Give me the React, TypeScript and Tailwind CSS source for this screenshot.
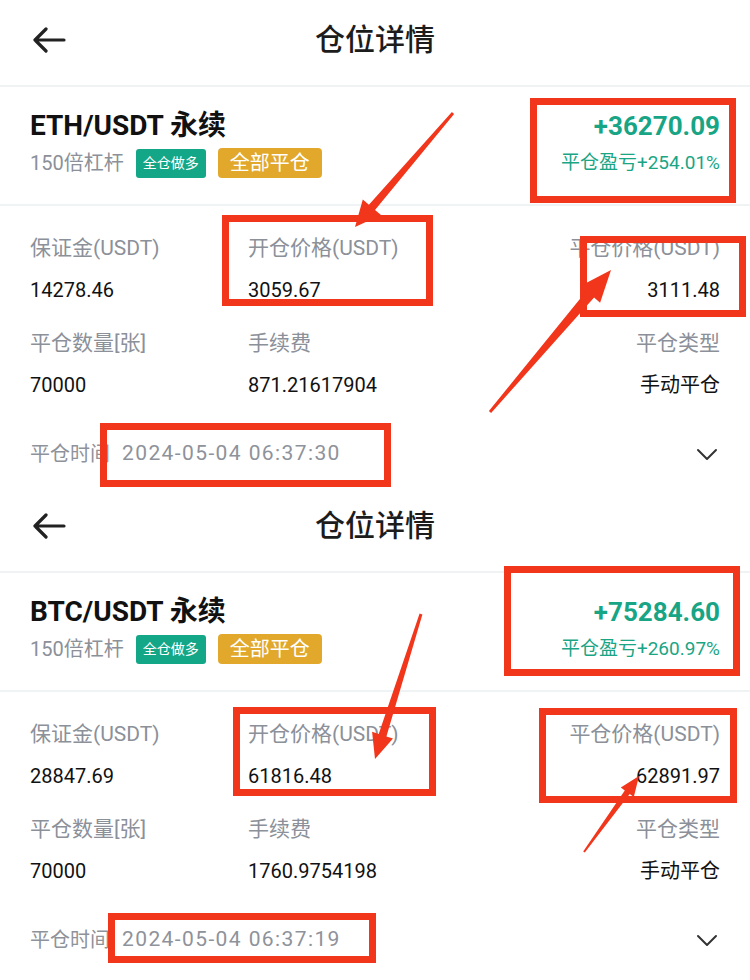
import React from 'react';

type Position = {
  pair: string;
  pnl: string;
  pnlRate: string;
  margin: string;
  openPrice: string;
  closePrice: string;
  qty: string;
  fee: string;
  closeType: string;
  closeTime: string;
};

const positions: Position[] = [
  {
    pair: 'ETH/USDT 永续',
    pnl: '+36270.09',
    pnlRate: '平仓盈亏+254.01%',
    margin: '14278.46',
    openPrice: '3059.67',
    closePrice: '3111.48',
    qty: '70000',
    fee: '871.21617904',
    closeType: '手动平仓',
    closeTime: '2024-05-04 06:37:30',
  },
  {
    pair: 'BTC/USDT 永续',
    pnl: '+75284.60',
    pnlRate: '平仓盈亏+260.97%',
    margin: '28847.69',
    openPrice: '61816.48',
    closePrice: '62891.97',
    qty: '70000',
    fee: '1760.9754198',
    closeType: '手动平仓',
    closeTime: '2024-05-04 06:37:19',
  },
];

// red annotation boxes drawn over the screenshots: [left, top, width, height]
const boxes = [
  [530, 98, 206, 105],
  [222, 215, 211, 91],
  [580, 236, 166, 81],
  [100, 423, 291, 64],
  [504, 566, 236, 110],
  [233, 707, 203, 89],
  [539, 708, 198, 95],
  [108, 913, 268, 50],
];

const arrows = [
  { from: [453, 113], to: [355, 227], head: 26, wing: 12, tail: 1.5, neck: 4 },
  { from: [490, 412], to: [611, 270], head: 32, wing: 13, tail: 1.5, neck: 5 },
  { from: [421, 614], to: [375, 759], head: 25, wing: 11, tail: 1.5, neck: 4 },
  { from: [584, 852], to: [639, 776], head: 20, wing: 8, tail: 1, neck: 3 },
];

function arrowPoints(a: (typeof arrows)[number]) {
  const [x1, y1] = a.from;
  const [x2, y2] = a.to;
  const len = Math.hypot(x2 - x1, y2 - y1);
  const dx = (x2 - x1) / len;
  const dy = (y2 - y1) / len;
  const nx = -dy;
  const ny = dx;
  const bx = x2 - dx * a.head;
  const by = y2 - dy * a.head;
  const pts = [
    [x1 + nx * a.tail, y1 + ny * a.tail],
    [bx + nx * a.neck, by + ny * a.neck],
    [bx + nx * a.wing, by + ny * a.wing],
    [x2, y2],
    [bx - nx * a.wing, by - ny * a.wing],
    [bx - nx * a.neck, by - ny * a.neck],
    [x1 - nx * a.tail, y1 - ny * a.tail],
  ];
  return pts.map((p) => p.map((v) => v.toFixed(1)).join(',')).join(' ');
}

function BackIcon() {
  return (
    <svg width="34" height="26" viewBox="0 0 34 26" fill="none" stroke="#222" strokeWidth="3.2" strokeLinecap="round" strokeLinejoin="round">
      <path d="M32 13H3M14 2L3 13l11 11" />
    </svg>
  );
}

function ChevronDown() {
  return (
    <svg width="22" height="13" viewBox="0 0 22 13" fill="none" stroke="#333" strokeWidth="2" strokeLinecap="round" strokeLinejoin="round">
      <path d="M2 2l9 9 9-9" />
    </svg>
  );
}

function Panel({ p }: { p: Position }) {
  return (
    <section className="flex flex-col pb-[19px]">
      <header className="grid h-[85px] grid-cols-[1fr_auto_1fr] items-center px-[32px] pb-[5px]">
        <BackIcon />
        <h1 className="text-[30px] font-medium leading-[40px] text-[#1c1c1c]">仓位详情</h1>
        <div />
      </header>
      <div className="h-[2px] bg-[#f0f3f3]" />

      <div className="flex flex-col px-[30px] pt-[24px] pb-[26px]">
        <div className="flex h-[30px] items-center justify-between">
          <span className="text-[28px] font-bold text-[#111]">{p.pair}</span>
          <span className="text-[26px] font-bold text-[#17a585]">{p.pnl}</span>
        </div>
        <div className="mt-[7px] flex h-[30px] items-center justify-between">
          <div className="flex items-center">
            <span className="text-[20px] text-[#8b9099]">150倍杠杆</span>
            <span className="ml-[12px] flex h-[29px] items-center rounded-[3px] bg-[#13a788] px-[7px] text-[14px] text-white">全仓做多</span>
            <span className="ml-[12px] flex h-[30px] items-center rounded-[4px] bg-[#e1a82c] px-[12px] text-[20px] text-white">全部平仓</span>
          </div>
          <span className="text-[19px] text-[#1aa585]">{p.pnlRate}</span>
        </div>
      </div>
      <div className="h-[2px] bg-[#f0f3f3]" />

      <div className="flex flex-col px-[30px] pt-[29px]">
        <div className="grid grid-cols-[218px_1fr_auto] leading-[26px]">
          <span className="text-[21px] text-[#8b9099]">保证金(USDT)</span>
          <span className="text-[21px] text-[#8b9099]">开仓价格(USDT)</span>
          <span className="text-right text-[21px] text-[#8b9099]">平仓价格(USDT)</span>
          <span className="mt-[16px] text-[20px] text-[#111]">{p.margin}</span>
          <span className="mt-[16px] text-[20px] text-[#111]">{p.openPrice}</span>
          <span className="mt-[16px] text-right text-[20px] text-[#111]">{p.closePrice}</span>

          <span className="mt-[27px] text-[21px] text-[#8b9099]">平仓数量[张]</span>
          <span className="mt-[27px] text-[21px] text-[#8b9099]">手续费</span>
          <span className="mt-[27px] text-right text-[21px] text-[#8b9099]">平仓类型</span>
          <span className="mt-[16px] text-[20px] text-[#111]">{p.qty}</span>
          <span className="mt-[16px] text-[20px] text-[#111]">{p.fee}</span>
          <span className="mt-[16px] text-right text-[20px] text-[#111]">{p.closeType}</span>
        </div>

        <div className="mt-[43px] flex h-[26px] items-center justify-between">
          <div className="flex items-center text-[20px] text-[#8e929a]">
            <span>平仓时间</span>
            <span className="ml-[12px] text-[21px] tracking-[1.4px]">{p.closeTime}</span>
          </div>
          <div className="mr-[2px]">
            <ChevronDown />
          </div>
        </div>
      </div>
    </section>
  );
}

export default function App() {
  return (
    <div className="relative h-[980px] w-[750px] overflow-hidden bg-white font-[Roboto,'Noto_Sans_CJK_SC',sans-serif]">
      {positions.map((p) => (
        <Panel key={p.pair} p={p} />
      ))}

      {/* annotations */}
      {boxes.map(([l, t, w, h], i) => (
        <div
          key={i}
          className="pointer-events-none absolute border-[7px] border-[#f1361b]"
          style={{ left: l, top: t, width: w, height: h }}
        />
      ))}
      <svg className="pointer-events-none absolute inset-0" width="750" height="980" viewBox="0 0 750 980">
        {arrows.map((a, i) => (
          <polygon key={i} points={arrowPoints(a)} fill="#f1361b" />
        ))}
      </svg>
    </div>
  );
}
